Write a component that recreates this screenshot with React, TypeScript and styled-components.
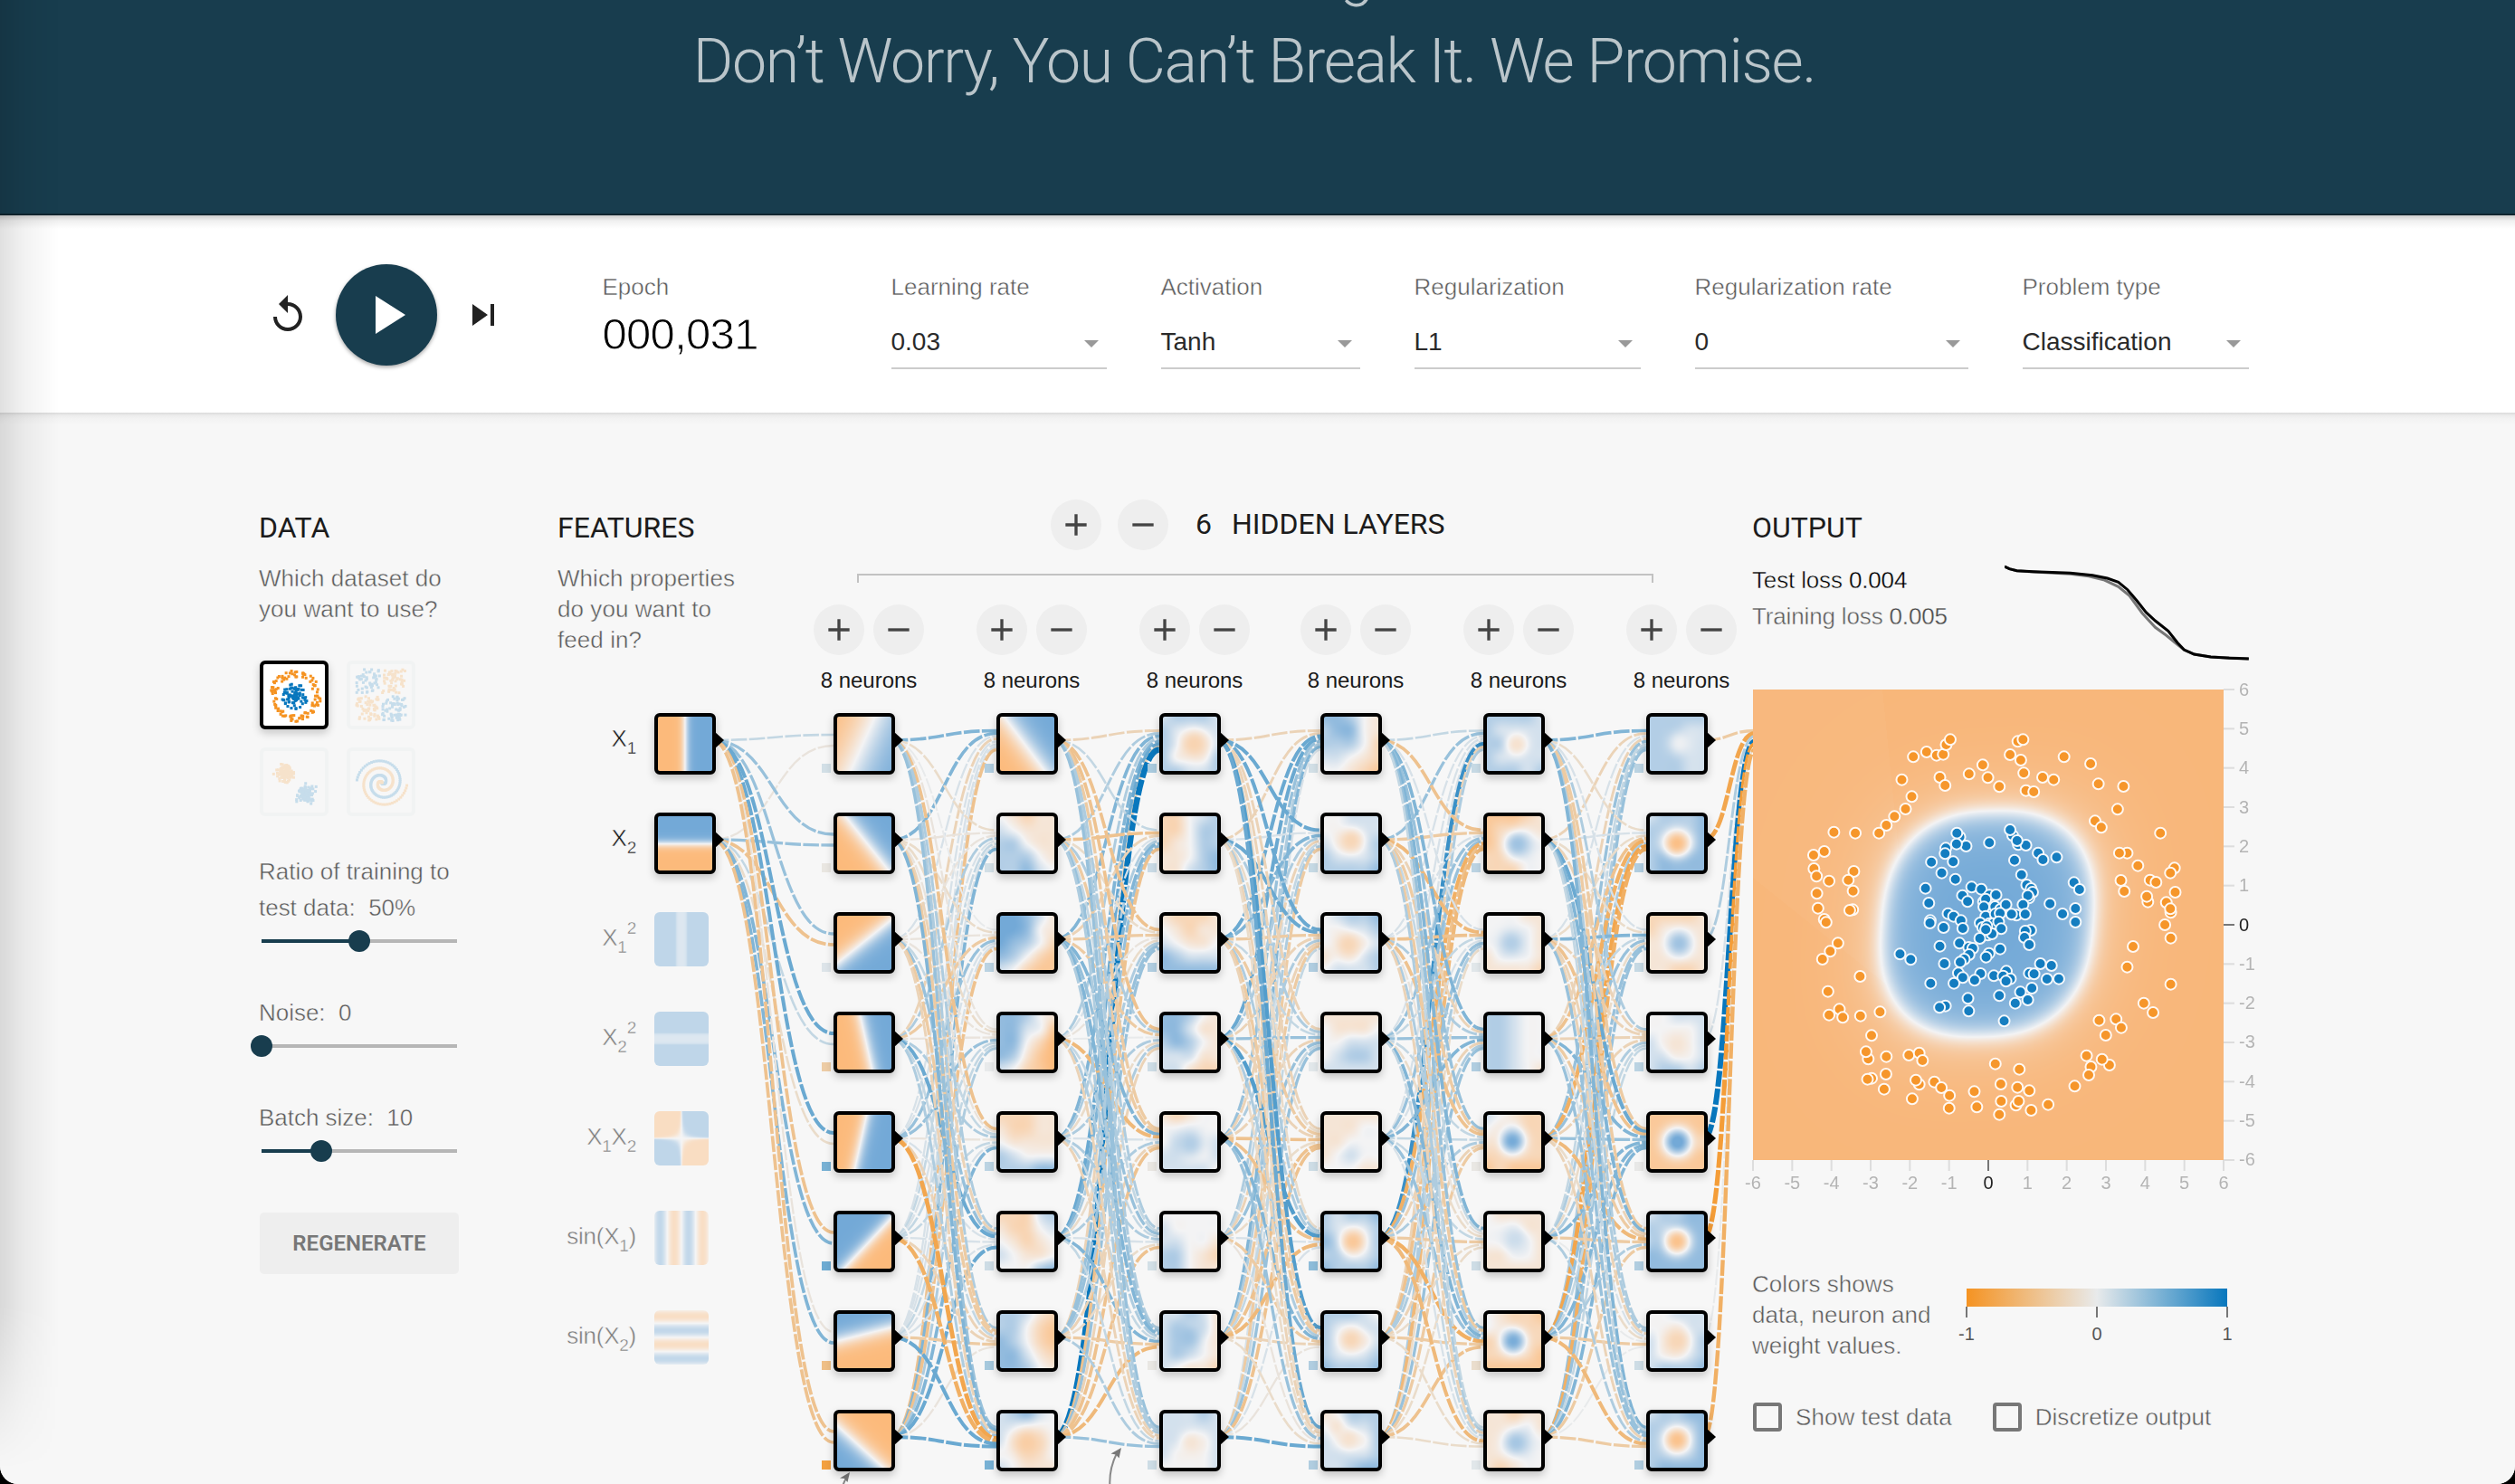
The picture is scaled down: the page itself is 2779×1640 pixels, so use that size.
import React, { useLayoutEffect, useRef } from "react";
import styled, { createGlobalStyle, css } from "styled-components";

const NAVY = "#183D4E";
const PAPER = "#f7f7f7";
const SOFT_TEXT = "#5a5a5a";
const SANS = `"Liberation Sans", Arial, sans-serif`;
const ROBOTO = `Roboto, "Liberation Sans", sans-serif`;

const GlobalStyle = createGlobalStyle`
  *, *::before, *::after { box-sizing: border-box; }
  html, body { margin: 0; padding: 0; background: #000; }
  body { overflow: hidden; font-family: ${SANS}; }
  svg, canvas { display: block; }
`;

/* ---------- colour scales ---------- */

type RGB = [number, number, number];
const mix = (a: RGB, b: RGB, t: number): RGB => [
  a[0] + (b[0] - a[0]) * t,
  a[1] + (b[1] - a[1]) * t,
  a[2] + (b[2] - a[2]) * t,
];
const clamp = (v: number) => Math.max(-1, Math.min(1, v));

const weightColor = (w: number) => {
  const v = clamp(w);
  const end: RGB = v < 0 ? [245, 147, 34] : [8, 119, 189];
  return `rgb(${mix([232, 234, 235], end, Math.abs(v)).map(Math.round).join(",")})`;
};

const NODE_ORANGE: RGB = [252, 186, 123];
const PLOT_ORANGE: RGB = [248, 182, 121];

const heatColor = (value: number, orange: RGB): RGB => {
  const v = clamp(value);
  return mix([243, 243, 244], v < 0 ? orange : [115, 169, 215], Math.abs(v));
};

/* ---------- heat maps ---------- */

type Field = (u: number, v: number) => number;

const plane = (a: number, b: number, c: number, k: number): Field => (u, v) =>
  Math.tanh(k * (a * u + b * v + c));

const cubic = (p0: number, p1: number, p2: number, p3: number, t: number) =>
  p1 + 0.5 * t * (p2 - p0 + t * (2 * p0 - 5 * p1 + 4 * p2 - p3 + t * (3 * (p1 - p2) + p3 - p0)));

/* Five rows of five samples: 0 is -1, 4 is neutral and 8 is +1. */
const grid = (text: string): Field => {
  const rows = text.split(" ").map((r) => r.split("").map((c) => (Number(c) - 4) / 4));
  const at = (y: number, x: number) =>
    rows[Math.max(0, Math.min(4, y))][Math.max(0, Math.min(4, x))];
  return (u, v) => {
    const gx = Math.min(3.999, (u + 1) * 2);
    const gy = Math.min(3.999, (v + 1) * 2);
    const ix = Math.floor(gx);
    const iy = Math.floor(gy);
    const line = (y: number) =>
      cubic(at(y, ix - 1), at(y, ix), at(y, ix + 1), at(y, ix + 2), gx - ix);
    return cubic(line(iy - 1), line(iy), line(iy + 1), line(iy + 2), gy - iy);
  };
};

/* A round spot of one value over a grid. */
const blob = (text: string, cx: number, cy: number, r: number, value: number): Field => {
  const base = grid(text);
  return (u, v) => {
    const g = Math.exp(-Math.pow(Math.hypot(u - cx, v - cy) / r, 2.4));
    return base(u, v) * (1 - g) + value * g;
  };
};

const HeatCanvas = styled.canvas<{ $size: number }>`
  width: ${(p) => p.$size}px;
  height: ${(p) => p.$size}px;
`;

function Heatmap({ field, size, orange = NODE_ORANGE }: { field: Field; size: number; orange?: RGB }) {
  const ref = useRef<HTMLCanvasElement>(null);
  useLayoutEffect(() => {
    const ctx = ref.current?.getContext("2d");
    if (!ctx) return;
    const image = ctx.createImageData(size, size);
    for (let y = 0; y < size; y++) {
      for (let x = 0; x < size; x++) {
        const c = heatColor(field(((x + 0.5) / size) * 2 - 1, ((y + 0.5) / size) * 2 - 1), orange);
        const i = (y * size + x) * 4;
        image.data[i] = c[0];
        image.data[i + 1] = c[1];
        image.data[i + 2] = c[2];
        image.data[i + 3] = 255;
      }
    }
    ctx.putImageData(image, 0, 0);
  }, [field, size, orange]);
  return <HeatCanvas ref={ref} width={size} height={size} $size={size} />;
}

/* ---------- network data ---------- */

const LAYERS: Field[][] = [
  [
    plane(1, 0.45, 0.05, 0.9),
    plane(1, -0.8, -0.1, 1.9),
    plane(0.8, 1, 0.05, 2),
    plane(1, -0.22, -0.07, 3.2),
    plane(1, 0.22, 0.13, 3.6),
    plane(-1.06, -1, 0.2, 2.4),
    plane(-0.25, -1, -0.25, 2.6),
    plane(-0.91, 1, -0.36, 1.9),
  ],
  [
    plane(1, -0.75, 0.1, 1.5),
    grid("43233 54333 66433 66643 66754"),
    grid("88753 88743 87642 76421 54211"),
    grid("77643 77541 77420 76310 54210"),
    grid("22233 32233 43333 65444 66677"),
    grid("22256 32245 43234 54334 44467"),
    grid("66532 66421 76421 77532 77643"),
    blob("56754 55544 54434 44334 54333", 0, 0.08, 0.6, -0.65),
  ],
  [
    blob("56665 65555 65445 64446 66556", 0.15, 0, 0.55, -0.55),
    grid("22456 22466 23466 33467 33567"),
    grid("32223 43233 54334 76555 77777"),
    grid("77643 77533 67643 55533 55322"),
    blob("32344 44444 45445 55445 55554", 0, 0.05, 0.5, 0.5),
    grid("44444 54444 55443 66432 66433"),
    blob("55653 56553 56543 56543 54332", -0.1, -0.15, 0.5, 0.65),
    blob("55565 55555 55545 54445 44445", 0.05, 0.08, 0.45, -0.25),
  ],
  [
    grid("77643 67743 66642 55432 44321"),
    blob("44555 44555 54456 65556 66667", 0, -0.1, 0.48, -0.5),
    blob("45667 44556 44445 34456 45556", -0.1, 0.07, 0.5, -0.5),
    grid("33333 43334 44555 45665 55555"),
    grid("33333 33344 33444 34544 44433"),
    blob("65667 65556 76556 66556 76667", 0.07, 0, 0.48, -0.75),
    blob("66654 65555 65545 65556 76667", 0, -0.05, 0.5, -0.5),
    blob("34666 43556 54446 55556 55677", -0.08, -0.05, 0.4, -0.3),
  ],
  [
    blob("66665 65555 66555 65555 66656", 0.1, 0.02, 0.42, -0.3),
    blob("11123 12233 12344 22344 22244", 0.13, 0.03, 0.5, 0.65),
    blob("44433 44443 44443 34443 33332", -0.1, 0, 0.48, 0.5),
    grid("66544 66544 66544 66544 66543"),
    blob("54322 43322 32222 22222 12111", -0.06, -0.03, 0.48, 0.98),
    blob("43333 44433 44443 33443 33333", 0.03, -0.08, 0.45, 0.3),
    blob("43221 43222 22222 22221 11111", -0.03, 0, 0.48, 0.95),
    blob("33233 33343 33344 33344 32344", 0.08, 0.08, 0.52, 0.6),
  ],
  [
    blob("66666 66655 66655 66655 66655", 0.12, -0.02, 0.45, 0.05),
    blob("56667 66667 66667 67777 67777", 0, 0, 0.5, -0.9),
    blob("22223 23333 33333 33333 33223", 0.08, 0.02, 0.5, 0.65),
    blob("44555 44445 54445 55445 56656", 0, 0.05, 0.45, -0.25),
    blob("11111 11111 11112 11111 11111", 0.02, 0, 0.54, 1.1),
    blob("56677 66777 67777 77777 77777", 0, 0, 0.5, -0.85),
    blob("44555 44455 54456 54456 56667", 0, 0, 0.52, -0.5),
    blob("56677 66667 66667 66667 67777", 0, -0.02, 0.5, -0.85),
  ],
];

/* WEIGHTS[layer][source][destination], in tenths. */
const WEIGHTS: number[][][] = [
  [
    [2, 4, 4, 6, 6, -5, -1, -5],
    [-1, 4, -5, 2, -2, 5, 5, -5],
  ],
  [
    [5, -2, 0, -1, -5, 3, 3, 4],
    [5, -1, -2, -2, -1, -3, -4, 5],
    [1, -1, -1, -1, 2, 4, -4, -3],
    [-3, 3, -4, -1, 3, 6, 2, 3],
    [1, 1, 4, 4, -1, 1, -3, -8],
    [1, 2, 1, 2, 2, 1, -3, -7],
    [1, 1, 1, 2, 1, 1, -4, 6],
    [-5, 5, -5, 3, 5, 6, -1, 6],
  ],
  [
    [-3, 2, -5, -5, -4, 3, 3, 4],
    [3, -5, -2, 3, -4, 2, 4, 3],
    [5, -3, -4, -4, 5, 4, 5, 3],
    [3, 1, -1, 0, -6, 2, 3, -3],
    [5, 3, -2, 3, 1, 3, 2, -3],
    [6, 5, 3, -2, 3, 1, 5, 2],
    [-3, 4, 4, 3, -3, -2, -4, 3],
    [12, -5, 4, -3, -5, -5, -6, 4],
  ],
  [
    [-3, 6, 6, -3, -3, -2, 7, 6],
    [-3, 1, 6, 3, -2, 3, -3, -2],
    [6, 5, -4, 2, -4, 3, -4, -3],
    [6, 3, -3, 4, -3, 7, 3, -2],
    [4, -3, 3, -3, -5, -5, 5, 4],
    [3, 2, -3, 4, -2, 1, -4, -1],
    [5, 3, -4, 2, -5, -6, -3, -2],
    [1, -4, 2, 4, -5, 1, -1, 6],
  ],
  [
    [2, -5, 1, 5, 4, 5, 4, 2],
    [4, -4, -6, -3, -4, 2, -4, 3],
    [1, 1, -5, 3, -5, -1, 3, -3],
    [1, 4, 2, 4, 2, -2, 5, 2],
    [1, 4, 1, 5, 2, 2, 4, 1],
    [8, -7, 4, -3, 3, -4, -7, -6],
    [-3, -5, 3, 3, -3, -2, -4, -2],
    [3, -6, -2, 4, -4, -2, -5, -2],
  ],
  [
    [5, -2, 1, 3, -4, -4, 3, 5],
    [-3, 1, -2, -3, 6, 5, 3, 2],
    [1, -2, 5, -3, -5, -3, -3, 4],
    [-3, -5, 2, -3, 5, -4, 1, 4],
    [4, -7, 4, -3, 4, -6, -2, -3],
    [2, 3, -2, 3, 5, -4, 0, 3],
    [3, -8, 4, 2, 5, 3, -4, -6],
    [4, -7, 4, 2, 5, -4, 0, -4],
  ],
  [[-4], [-8], [3], [1], [11], [-9], [0], [-7]],
];

const BIASES: number[][] = [
  [0.1, -0.05, 0.05, -0.35, 0.5, 0.55, -0.5, -0.85],
  [0.25, 0.1, 0.2, 0, 0.2, 0.12, 0.3, 0.5],
  [0.28, 0.14, 0.25, 0.12, -0.05, 0.1, -0.04, 0.12],
  [0.1, 0.15, 0.25, 0.03, 0.12, 0.4, 0.25, 0.25],
  [0.15, 0.2, 0.03, 0.25, -0.04, 0.12, -0.15, 0.03],
  [0.2, 0.25, 0.15, 0.2, -0.02, 0.25, 0.12, 0.25],
];

/* ---------- diagram geometry ---------- */

const ORIGIN_X = 616;
const FEATURE_X = 723 - ORIGIN_X;
const COLUMNS = [921, 1101, 1281, 1459, 1639, 1819].map((x) => x - ORIGIN_X);
const OUTPUT_X = 1939 - ORIGIN_X;
const ROW = 110;
const SIDE = 60;
const ROWS = [0, 1, 2, 3, 4, 5, 6, 7];

const linkPath = (x0: number, y0: number, x1: number, y1: number) => {
  const m = (x0 + x1) / 2;
  return `M${x0},${y0}C${m},${y0} ${m},${y1} ${x1},${y1}`;
};

const Links = styled.svg`
  position: absolute;
  left: 0;
  top: 0;
  overflow: visible;
`;

function LinkLayer() {
  const starts = [FEATURE_X, ...COLUMNS];
  const ends = [...COLUMNS, OUTPUT_X];
  return (
    <Links width={1321} height={852}>
      <g fill="none" strokeDasharray="17.6 2.4" strokeDashoffset={-0.67}>
        {WEIGHTS.map((layer, l) =>
          (l === 6 ? [0] : ROWS).map((d) =>
            layer.map((out, s) => {
              const w = Math.sign(out[d]) * Math.pow(Math.abs(out[d]) / 10, 1.12);
              const bend = ((s - (layer.length - 1) / 2) / layer.length) * 24;
              return (
                <path
                  key={`${l}-${s}-${d}`}
                  d={linkPath(starts[l] + 64, s * ROW + 30, ends[l], d * ROW + 30 + bend)}
                  stroke={weightColor(w)}
                  strokeWidth={2 + Math.abs(w) * 3.6}
                />
              );
            })
          )
        )}
      </g>
      {COLUMNS.map((x, c) =>
        ROWS.map((r) => (
          <rect
            key={`${c}-${r}`}
            x={x - 13}
            y={r * ROW + 56}
            width={10}
            height={10}
            fill={weightColor(BIASES[c][r])}
          />
        ))
      )}
      <g fill="none" stroke="#888" strokeWidth={2}>
        <path d="M315,856 Q316,850 319,846" />
        <path d="M610.5,856 Q609,836 618,818" />
      </g>
      <path d="M323,839 L320.5,850 L317,846 L312,845.5 Z" fill="#777" />
      <path d="M623,812 L620.5,823.5 L617,819.5 L611.5,818.5 Z" fill="#777" />
    </Links>
  );
}

const NodeBox = styled.div<{ $active: boolean }>`
  position: absolute;
  border-radius: 6px;
  ${(p) =>
    p.$active
      ? css`
          border: 4px solid #000;
          background: #000;
          box-shadow: 0 4px 10px rgba(0, 0, 0, 0.22);
          &::after {
            content: "";
            position: absolute;
            left: 62px;
            top: 16px;
            width: 0;
            height: 0;
            border: 10px solid transparent;
            border-left: 11px solid #000;
            border-right: 0;
          }
          canvas {
            border-radius: 2px;
          }
        `
      : css`
          overflow: hidden;
          opacity: 0.42;
        `}
`;

function NetNode({ x, row, field, active = true }: { x: number; row: number; field: Field; active?: boolean }) {
  return (
    <NodeBox $active={active} style={{ left: x, top: row * ROW }}>
      <Heatmap field={field} size={SIDE} />
    </NodeBox>
  );
}

const FeatureName = styled.div<{ $active: boolean }>`
  position: absolute;
  left: 0;
  width: 87px;
  padding-top: 11px;
  text-align: right;
  white-space: nowrap;
  font: 26px/34px ${SANS};
  letter-spacing: -0.25px;
  color: ${(p) => (p.$active ? "#111" : "#7c7c7c")};
  -webkit-text-stroke: 0.45px ${PAPER};
  sub,
  sup {
    font-size: 19px;
    line-height: 0;
    position: relative;
    vertical-align: baseline;
  }
  sub {
    top: 8px;
  }
  sup {
    top: -13px;
  }
`;

const FEATURES: { name: React.ReactNode; field: Field; active: boolean }[] = [
  { name: <>X<sub>1</sub></>, field: plane(1, 0, 0, 5.5), active: true },
  { name: <>X<sub>2</sub></>, field: plane(0, -1, 0.02, 5.5), active: true },
  { name: <>X<sub>1</sub><sup>2</sup></>, field: (u) => Math.min(1, 0.45 + Math.pow(Math.abs(u) * 3.8, 4)), active: false },
  { name: <>X<sub>2</sub><sup>2</sup></>, field: (_u, v) => Math.min(1, 0.45 + Math.pow(Math.abs(v) * 3.8, 4)), active: false },
  { name: <>X<sub>1</sub>X<sub>2</sub></>, field: (u, v) => -Math.tanh(u * v * 30), active: false },
  { name: <>sin(X<sub>1</sub>)</>, field: (u) => Math.sin(u * 6) * 0.95, active: false },
  { name: <>sin(X<sub>2</sub>)</>, field: (_u, v) => -Math.sin(v * 6) * 0.95, active: false },
];

const Diagram = styled.div`
  position: relative;
  height: 852px;
`;

/* ---------- shared type ---------- */

const Heading = styled.h4`
  margin: 0;
  font: 400 32px/40px ${ROBOTO};
  color: #1c1c1c;
`;

const Note = styled.p`
  margin: 19px 0 0;
  font: 26px/34px ${SANS};
  letter-spacing: 0.06px;
  color: ${SOFT_TEXT};
  white-space: pre-line;
  -webkit-text-stroke: 0.45px ${PAPER};
`;

/* ---------- header ---------- */

const Page = styled.div`
  position: relative;
  width: 2779px;
  height: 1640px;
  overflow: hidden;
  background: ${PAPER};
  border-radius: 0 0 20px 20px;
`;

const EdgeShade = styled.div`
  position: absolute;
  inset: 0 auto 0 0;
  width: 66px;
  background: linear-gradient(90deg, rgba(0, 0, 0, 0.12), rgba(0, 0, 0, 0.05) 40%, transparent);
  mask-image: linear-gradient(#000 88%, transparent 99%);
  pointer-events: none;
`;

const Banner = styled.header`
  display: flex;
  flex-direction: column;
  justify-content: flex-end;
  height: 238px;
  padding: 0 7px 118px 0;
  overflow: hidden;
  background: ${NAVY};
  border-bottom: 2px solid #10252f;
`;

const BannerTitle = styled.h1`
  margin: 0;
  font: 300 68px/98.6px ${ROBOTO};
  color: rgba(255, 255, 255, 0.7);
  letter-spacing: -1.38px;
  text-align: center;
  white-space: nowrap;
  b {
    font-weight: 400;
  }
`;

/* ---------- controls ---------- */

const Toolbar = styled.section`
  display: flex;
  align-items: flex-start;
  height: 218px;
  padding: 54px 0 0 294px;
  background: linear-gradient(rgba(0, 0, 0, 0.2), rgba(0, 0, 0, 0.06) 6px, transparent 15px) #fff;
`;

const Playback = styled.div`
  display: flex;
  align-items: center;
  width: 371.5px;
  height: 112px;
`;

const GlyphButton = styled.button`
  display: flex;
  padding: 0;
  border: 0;
  background: none;
  fill: #222;
`;

const PlayButton = styled(GlyphButton)`
  align-items: center;
  justify-content: center;
  width: 112px;
  height: 112px;
  margin: 0 27px 0 29px;
  border-radius: 50%;
  background: ${NAVY};
  fill: #fff;
  box-shadow: 0 2px 4px rgba(0, 0, 0, 0.35);
`;

const Control = styled.div<{ $w: number; $gap: number }>`
  width: ${(p) => p.$w}px;
  margin: 8px ${(p) => p.$gap}px 0 0;
`;

const ControlLabel = styled.div`
  font: 26px/34px ${SANS};
  color: ${SOFT_TEXT};
  -webkit-text-stroke: 0.45px #fff;
`;

const EpochCount = styled.div`
  margin-top: 7px;
  font: 49px/56px ${SANS};
  color: #000;
  letter-spacing: -0.7px;
  -webkit-text-stroke: 0.9px #fff;
`;

const SelectBox = styled.div`
  display: flex;
  justify-content: space-between;
  margin-top: 27px;
  padding: 0 9px 11px 0;
  border-bottom: 2px solid #ccc;
  font: 28px/34px ${SANS};
  color: #2a2a2a;
`;

const Caret = styled.i`
  align-self: flex-start;
  width: 0;
  height: 0;
  margin-top: 15px;
  border: 8.5px solid transparent;
  border-top-color: #999;
  border-bottom: 0;
`;

const SELECTS: [string, string, number][] = [
  ["Learning rate", "0.03", 238],
  ["Activation", "Tanh", 220],
  ["Regularization", "L1", 250],
  ["Regularization rate", "0", 302],
  ["Problem type", "Classification", 250],
];

/* ---------- body columns ---------- */

const Body = styled.main`
  display: flex;
  height: 1184px;
  padding-left: 286px;
  background: linear-gradient(#d9d9d9, #ececec 3px, #f3f3f3 7px, ${PAPER} 14px);
`;

const DataColumn = styled.section`
  width: 330px;
  padding-top: 107px;
`;

const Datasets = styled.div`
  display: grid;
  grid-template-columns: 76px 76px;
  gap: 20px;
  margin: 40px 0 41px 1px;
`;

const Dataset = styled.div<{ $on?: boolean }>`
  height: 76px;
  border: 4px solid ${(p) => (p.$on ? "#000" : "#f1f3f3")};
  border-radius: 6px;
  background: ${(p) => (p.$on ? "#fff" : "transparent")};
  box-shadow: ${(p) => (p.$on ? "0 4px 10px rgba(0,0,0,.2)" : "none")};
  svg {
    opacity: ${(p) => (p.$on ? 1 : 0.2)};
  }
`;

const SliderLabel = styled.div`
  margin-bottom: 5px;
  font: 26px/40px ${SANS};
  color: ${SOFT_TEXT};
  letter-spacing: -0.02px;
  white-space: pre;
  -webkit-text-stroke: 0.45px ${PAPER};
`;

const Track = styled.div<{ $at: number }>`
  display: flex;
  align-items: center;
  width: 216px;
  height: 24px;
  margin: 0 0 47px 3px;
  background: linear-gradient(90deg, ${NAVY} ${(p) => p.$at}px, #b6b6b6 ${(p) => p.$at}px) center / 100% 4px no-repeat;
`;

const Knob = styled.span<{ $at: number }>`
  width: 24px;
  height: 24px;
  margin-left: ${(p) => p.$at - 12}px;
  border-radius: 50%;
  background: ${NAVY};
`;

const Regenerate = styled.button`
  display: block;
  width: 220px;
  height: 68px;
  margin: 56px 0 0 1px;
  border: 0;
  border-radius: 5px;
  background: #eee;
  color: #777;
  font: 600 24px ${ROBOTO};
`;

function Slider({ label, at }: { label: string; at: number }) {
  return (
    <>
      <SliderLabel>{label}</SliderLabel>
      <Track $at={at}>
        <Knob $at={at} />
      </Track>
    </>
  );
}

const random = (seed: number) => {
  let s = seed;
  return () => {
    s = (s * 16807) % 2147483647;
    return s / 2147483647;
  };
};

type Dot = [number, number, number];

const makeCircle = (): Dot[] => {
  const r = random(71);
  return Array.from({ length: 190 }, (_, i) => {
    const blue = i < 85;
    const rad = blue ? r() * 14.5 : 20.5 + r() * 8;
    const a = r() * Math.PI * 2;
    return [35 + rad * Math.cos(a), 35 + rad * Math.sin(a), blue ? 1 : -1];
  });
};
const makeXor = (): Dot[] => {
  const r = random(4217);
  return Array.from({ length: 230 }, () => {
    const x = r() * 2 - 1;
    const y = r() * 2 - 1;
    return [34 + x * 26 + Math.sign(x) * 1.5, 34 + y * 27 + Math.sign(y) * 1.5, x * y > 0 ? 1 : -1];
  });
};
const makeGauss = (): Dot[] => {
  const r = random(5);
  const g = () => (r() + r() + r() + r() - 2) * 7.5;
  return Array.from({ length: 260 }, (_, i) =>
    i % 2 ? [24.5 + g(), 24 + g(), -1] : [47.5 + g(), 47 + g(), 1]
  );
};
const makeSpiral = (): Dot[] =>
  Array.from({ length: 200 }, (_, i) => {
    const k = (i % 100) / 100;
    const t = 1.75 * k * 2 * Math.PI + (i < 100 ? 0 : Math.PI);
    return [35 + 28 * k * Math.sin(t), 35 + 28 * k * Math.cos(t), i < 100 ? 1 : -1];
  });

function DatasetThumb({ dots, on }: { dots: Dot[]; on?: boolean }) {
  return (
    <Dataset $on={on}>
      <svg width={68} height={68}>
        {dots.map(([x, y, c], i) => (
          <rect key={i} x={x - 1.5} y={y - 1.5} width={3} height={3} fill={c > 0 ? "#0877bd" : "#f59322"} />
        ))}
      </svg>
    </Dataset>
  );
}

/* ---------- network column ---------- */

const NetworkColumn = styled.section`
  width: 1321px;
`;

const NetworkHead = styled.div`
  display: flex;
  height: 332px;
`;

const FeatureIntro = styled.div`
  width: 283px;
  padding-top: 107px;
`;

const LayerPanel = styled.div`
  padding-top: 96px;
`;

const LayerBar = styled.div`
  display: flex;
  align-items: center;
  gap: 18px;
  padding-left: 262px;
`;

const LayerCount = styled(Heading)`
  margin: -3px -6px 0 12px;
`;

const LayerTitle = styled(Heading)`
  margin: -3px 0 0 10px;
`;

const Bracket = styled.div`
  width: 880px;
  height: 10px;
  margin: 26px 0 24px 48px;
  border: 2px solid #c2c2c2;
  border-bottom: 0;
`;

const Columns = styled.div`
  display: grid;
  grid-template-columns: 180px 180px 178px 180px 180px 122px;
`;

const ColumnControl = styled.div`
  display: flex;
  flex-wrap: wrap;
  justify-content: space-between;
  width: 122px;
`;

const NeuronCount = styled.div`
  width: 100%;
  margin-top: 14px;
  font: 24px/28px ${SANS};
  color: #1a1a1a;
  text-align: center;
  white-space: nowrap;
`;

const Round = styled.button`
  display: flex;
  align-items: center;
  justify-content: center;
  width: 56px;
  height: 56px;
  padding: 0;
  border: 0;
  border-radius: 50%;
  background: #eee;
  fill: #444;
`;

const Plus = () => (
  <Round>
    <svg width={40} height={40} viewBox="0 0 24 24">
      <path d="M19 13h-6v6h-2v-6H5v-2h6V5h2v6h6v2z" />
    </svg>
  </Round>
);
const Minus = () => (
  <Round>
    <svg width={40} height={40} viewBox="0 0 24 24">
      <path d="M19 13H5v-2h14v2z" />
    </svg>
  </Round>
);

/* ---------- output column ---------- */

const OutputColumn = styled.section`
  position: relative;
  width: 600px;
  padding-top: 107px;
`;

const OutputHeading = styled(Heading)`
  margin-left: -1px;
`;

const LossRow = styled.div`
  display: flex;
  height: 141px;
  margin-top: 18px;
`;

const LossText = styled.div`
  width: 278px;
  font: 26px/40px ${SANS};
  letter-spacing: -0.15px;
  white-space: nowrap;
`;

const Loss = styled.div<{ $muted?: boolean }>`
  margin-left: -1px;
  color: ${(p) => (p.$muted ? SOFT_TEXT : "#000")};
  -webkit-text-stroke: 0.45px ${PAPER};
  b {
    font-weight: 400;
    color: ${(p) => (p.$muted ? "#4c4c4c" : "#000")};
    -webkit-text-stroke: 0.3px ${PAPER};
  }
`;

const Plot = styled.div`
  display: grid;
  grid-template-columns: 520px 60px;
  grid-template-rows: 520px 60px;
  > :first-child,
  > .dots {
    grid-area: 1 / 1;
  }
  svg {
    overflow: visible;
  }
`;

const Tick = styled.text<{ $zero?: boolean }>`
  font: 20px ${SANS};
  fill: ${(p) => (p.$zero ? "#222" : "#b4b4b4")};
`;

const outputField: Field = (u, v) => {
  const x = u * 260 + 1 + v * 14;
  const y = v * 260 + 1;
  const r = Math.pow(Math.pow(Math.abs(x / 117), 2.5) + Math.pow(Math.abs(y / 125), 2.5), 0.4) + (x * y) / 700000;
  const d = (1 - r) * 120;
  if (d > 0) return 0.72 * Math.tanh(d / 15) + 0.28 * Math.tanh(d / 50);
  const corner = u < -0.45 + (v + 1) * 0.1 && v < -0.2 + (u + 1) * 0.8 ? 0.03 : 0;
  return -(0.68 * Math.tanh(-d / 13) + 0.31 * Math.tanh(-d / 48)) + corner;
};

/* Sample positions on a 1274 x 1440 lattice covering the plot. */
const ORANGE: [number, number][] = [
  [434, -191], [470, -207], [497, -196], [515, -199], [523, -231], [534, -248], [403, -115], [506, -123], [520, -96],
  [430, -59], [413, -18], [383, 7], [361, 36], [341, 62], [277, 62], [219, 59], [193, 123], [164, 135],
  [585, -134], [622, -164], [636, -122], [667, -92], [696, -198], [717, -242], [731, -248], [725, -180], [733, -137],
  [739, -79], [760, -75], [784, -123], [814, -115], [842, -191], [914, -168], [935, -101], [1003, -93], [987, -17],
  [926, 22], [943, 43], [1103, 62], [1013, 128], [992, 128], [1042, 170], [1141, 178], [1130, 194], [1075, 218],
  [1091, 225], [996, 219], [1005, 255], [1143, 258], [1069, 290], [1066, 272], [1119, 292], [1131, 325], [1130, 313],
  [1115, 366], [1131, 410], [1029, 438], [1013, 506], [1131, 563], [1058, 626], [1083, 657], [983, 679], [937, 683],
  [997, 707], [955, 732], [903, 800], [915, 837], [909, 864], [965, 831], [945, 812], [871, 901], [799, 962],
  [165, 180], [172, 205], [206, 221], [273, 189], [258, 218], [271, 254], [173, 262], [176, 311], [270, 316],
  [262, 318], [193, 348], [198, 358], [230, 427], [209, 454], [188, 480], [290, 537], [203, 587], [234, 646],
  [206, 665], [243, 673], [291, 668], [344, 655], [321, 733], [312, 811], [306, 787], [361, 803], [360, 861],
  [321, 875], [310, 878], [355, 911], [422, 798], [450, 791], [459, 816], [431, 943], [450, 895], [441, 881],
  [491, 887], [510, 906], [532, 932], [531, 974], [599, 919], [606, 970], [656, 827], [721, 845], [671, 894],
  [716, 905], [748, 916], [672, 951], [712, 964], [719, 951], [753, 981], [667, 995],
];
const BLUE: [number, number][] = [
  [560, 75], [552, 62], [522, 112], [520, 130], [577, 105], [551, 98], [640, 94], [703, 70], [696, 51], [718, 100],
  [739, 102], [715, 87], [772, 128], [785, 150], [822, 142], [708, 152], [483, 158], [542, 157], [511, 194], [548, 215],
  [467, 245], [592, 241], [618, 248], [727, 200], [741, 234], [753, 246], [757, 258], [747, 277], [744, 269], [869, 226],
  [884, 249], [567, 269], [581, 289], [640, 268], [658, 267], [624, 290], [630, 281], [476, 294], [625, 307], [655, 306],
  [670, 315], [685, 299], [731, 299], [804, 296], [873, 312], [528, 329], [543, 338], [563, 352], [480, 352], [479, 360],
  [516, 375], [568, 378], [630, 338], [656, 330], [669, 328], [713, 334], [700, 331], [737, 331], [838, 330], [873, 357],
  [615, 360], [622, 375], [640, 362], [650, 362], [665, 356], [672, 379], [633, 370], [636, 400], [647, 396], [630, 382],
  [752, 384], [737, 387], [735, 408], [748, 432], [559, 427], [614, 411], [584, 441], [595, 444], [585, 465], [506, 437],
  [669, 446], [398, 463], [427, 481], [639, 461], [631, 473], [518, 495], [572, 480], [561, 490], [778, 495], [808, 501],
  [686, 520], [556, 526], [568, 541], [616, 528], [600, 550], [652, 535], [677, 536], [697, 545], [685, 553], [748, 527],
  [761, 529], [796, 546], [828, 545], [481, 560], [544, 560], [755, 576], [724, 589], [667, 601], [744, 615], [710, 626],
  [582, 610], [584, 652], [521, 635], [505, 640], [680, 685],
];

const Legend = styled.div`
  display: flex;
  margin-top: 60px;
  ${Note} {
    margin: 0 0 0 -1px;
    width: 214px;
  }
`;

const Options = styled.div`
  display: flex;
  align-items: center;
  gap: 45px;
  margin-top: 46px;
`;

const Option = styled.label`
  display: flex;
  align-items: center;
  gap: 15px;
  font: 26px/32px ${SANS};
  letter-spacing: 0.05px;
  color: ${SOFT_TEXT};
  white-space: nowrap;
  -webkit-text-stroke: 0.45px ${PAPER};
  &::before {
    content: "";
    width: 32px;
    height: 32px;
    border: 4px solid #777;
    border-radius: 4px;
  }
`;

const AXIS = Array.from({ length: 13 }, (_, i) => i - 6);

function OutputPlot() {
  return (
    <Plot>
      <Heatmap field={outputField} size={520} orange={PLOT_ORANGE} />
      <svg className="dots" width={520} height={520}>
        {[ORANGE, BLUE].map((set, k) => (
          <g key={k} fill={k ? "#0877bd" : "#f59322"} stroke="#fff" strokeWidth={2} opacity={0.9}>
            {set.map(([x, y], i) => (
              <circle key={i} cx={x / 2.45} cy={y / 3 + 138} r={6} />
            ))}
          </g>
        ))}
      </svg>
      <svg width={60} height={520}>
        {AXIS.map((n) => {
          const y = 260 - n * 43.333;
          return (
            <g key={n}>
              <path d={`M0,${y}H12`} stroke={n ? "#ddd" : "#777"} strokeWidth={2} />
              <Tick $zero={n === 0} x={17} y={y + 6.5}>{n}</Tick>
            </g>
          );
        })}
      </svg>
      <svg width={520} height={60}>
        {AXIS.map((n) => {
          const x = 260 + n * 43.333;
          return (
            <g key={n}>
              <path d={`M${x},0V12`} stroke={n ? "#ddd" : "#777"} strokeWidth={2} />
              <Tick $zero={n === 0} x={x} y={32} textAnchor="middle">{n}</Tick>
            </g>
          );
        })}
      </svg>
    </Plot>
  );
}

const LOSS_TEST: [number, number][] = [
  [772, 258], [785, 266], [805, 272], [850, 275], [950, 280], [1010, 287], [1050, 297], [1080, 310], [1105, 335], [1130, 371],
  [1155, 410], [1180, 438], [1215, 472], [1240, 511], [1258, 534], [1285, 549], [1330, 558], [1380, 562], [1433, 564],
];
const LOSS_TRAIN: [number, number][] = [
  [772, 258], [785, 266], [805, 272], [850, 276], [950, 283], [1000, 290], [1040, 302], [1080, 325], [1110, 355], [1145, 413],
  [1180, 460], [1210, 487], [1240, 517], [1258, 535], [1285, 549], [1330, 558], [1433, 564],
];
const lossPath = (pts: [number, number][]) =>
  "M" + pts.map(([x, y]) => `${((x - 772) / 2.45).toFixed(1)},${(y / 3 - 81).toFixed(1)}`).join("L");

export default function App() {
  return (
    <>
      <GlobalStyle />
      <Page>
        <Banner>
          <BannerTitle>
            Tinker With a <b>Neural Network</b> Right Here in Your Browser.
            <br />
            Don’t Worry, You Can’t Break It. We Promise.
          </BannerTitle>
        </Banner>

        <Toolbar>
          <Playback>
            <GlyphButton>
              <svg width={48} height={48} viewBox="0 0 24 24">
                <path d="M12 5V1L7 6l5 5V7c3.31 0 6 2.69 6 6s-2.69 6-6 6-6-2.69-6-6H4c0 4.42 3.58 8 8 8s8-3.58 8-8-3.58-8-8-8z" />
              </svg>
            </GlyphButton>
            <PlayButton>
              <svg width={72} height={72} viewBox="0 0 24 24">
                <path d="M8 5v14l11-7z" />
              </svg>
            </PlayButton>
            <GlyphButton>
              <svg width={48} height={48} viewBox="0 0 24 24">
                <path d="M6 18l8.5-6L6 6v12zM16 6v12h2V6h-2z" />
              </svg>
            </GlyphButton>
          </Playback>
          <Control $w={319} $gap={0}>
            <ControlLabel>Epoch</ControlLabel>
            <EpochCount>000,031</EpochCount>
          </Control>
          {SELECTS.map(([label, value, width]) => (
            <Control key={label} $w={width} $gap={60}>
              <ControlLabel>{label}</ControlLabel>
              <SelectBox>
                {value}
                <Caret />
              </SelectBox>
            </Control>
          ))}
        </Toolbar>

        <Body>
          <DataColumn>
            <Heading>DATA</Heading>
            <Note>{"Which dataset do\nyou want to use?"}</Note>
            <Datasets>
              <DatasetThumb dots={makeCircle()} on />
              <DatasetThumb dots={makeXor()} />
              <DatasetThumb dots={makeGauss()} />
              <DatasetThumb dots={makeSpiral()} />
            </Datasets>
            <Slider label={"Ratio of training to\ntest data:  50%"} at={108} />
            <Slider label={"Noise:  0"} at={0} />
            <Slider label={"Batch size:  10"} at={66} />
            <Regenerate>REGENERATE</Regenerate>
          </DataColumn>

          <NetworkColumn>
            <NetworkHead>
              <FeatureIntro>
                <Heading>FEATURES</Heading>
                <Note>{"Which properties\ndo you want to\nfeed in?"}</Note>
              </FeatureIntro>
              <LayerPanel>
                <LayerBar>
                  <Plus />
                  <Minus />
                  <LayerCount>6</LayerCount>
                  <LayerTitle>HIDDEN LAYERS</LayerTitle>
                </LayerBar>
                <Bracket />
                <Columns>
                  {COLUMNS.map((x) => (
                    <ColumnControl key={x}>
                      <Plus />
                      <Minus />
                      <NeuronCount>8 neurons</NeuronCount>
                    </ColumnControl>
                  ))}
                </Columns>
              </LayerPanel>
            </NetworkHead>
            <Diagram>
              <LinkLayer />
              {FEATURES.map((f, i) => (
                <React.Fragment key={i}>
                  <FeatureName $active={f.active} style={{ top: i * ROW }}>{f.name}</FeatureName>
                  <NetNode x={FEATURE_X} row={i} field={f.field} active={f.active} />
                </React.Fragment>
              ))}
              {LAYERS.map((layer, c) =>
                layer.map((field, r) => <NetNode key={`${c}-${r}`} x={COLUMNS[c]} row={r} field={field} />)
              )}
            </Diagram>
          </NetworkColumn>

          <OutputColumn>
            <OutputHeading>OUTPUT</OutputHeading>
            <LossRow>
              <LossText>
                <Loss>Test loss <b>0.004</b></Loss>
                <Loss $muted>Training loss <b>0.005</b></Loss>
              </LossText>
              <svg width={272} height={120} fill="none" strokeWidth={3}>
                <path d={lossPath(LOSS_TRAIN)} stroke="#777" />
                <path d={lossPath(LOSS_TEST)} stroke="#000" />
              </svg>
            </LossRow>
            <OutputPlot />
            <Legend>
              <Note>{"Colors shows\ndata, neuron and\nweight values."}</Note>
              <svg width={330} height={100}>
                <defs>
                  <linearGradient id="scale">
                    <stop offset="0" stopColor="#f59322" />
                    <stop offset=".5" stopColor="#e8eaeb" />
                    <stop offset="1" stopColor="#0877bd" />
                  </linearGradient>
                </defs>
                <rect x={23} y={22} width={288} height={20} fill="url(#scale)" />
                {[-1, 0, 1].map((n) => (
                  <g key={n} fill="#555">
                    <rect x={166 + n * 144} y={42} width={2} height={12} fill="#777" />
                    <text x={167 + n * 144} y={79} fontSize={20} fontFamily="Liberation Sans" textAnchor="middle">{n}</text>
                  </g>
                ))}
              </svg>
            </Legend>
            <Options>
              <Option>Show test data</Option>
              <Option>Discretize output</Option>
            </Options>
          </OutputColumn>
        </Body>
        <EdgeShade />
      </Page>
    </>
  );
}
